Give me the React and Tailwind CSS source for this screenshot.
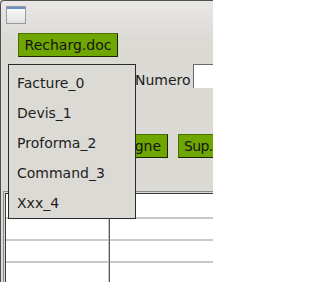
function GreenButton({ children, className }) {
  return (
    <button
      className={`h-[24px] shrink-0 flex items-center bg-[#6fa600] border border-[#4a7000] border-r-[#1a2600] border-b-[#1a2600] text-[14px] leading-none text-[#141414] ${className}`}
    >
      {children}
    </button>
  );
}

export default function App() {
  const docTypes = ["Facture_0", "Devis_1", "Proforma_2", "Command_3", "Xxx_4"];
  const rows = [0, 1, 2, 3];

  return (
    <div className="relative w-[213px] h-[282px] overflow-hidden bg-[#dcdad5] font-['DejaVu_Sans',sans-serif] text-[14px] text-[#1a1a1a]">
      <div className="w-[240px] min-h-[300px] flex flex-col border-l border-t border-[#505050] rounded-tl-[4px] bg-linear-to-b from-[#e8e7e4] to-[#dcdad5] to-[40px]">
        {/* window icon */}
        <div className="shrink-0 ml-[5px] mt-[5px] w-[20px] h-[18px] border border-[#9a9a9a] bg-linear-to-b from-[#fbfbfb] to-[#e2e2e2]">
          <div className="h-[2px] bg-[#6c8ec6]"></div>
        </div>

        <GreenButton className="ml-[17px] mt-[9px] w-[100px] justify-center">Recharg.doc</GreenButton>

        <div className="shrink-0 mt-[7px] flex h-[24px]">
          <div className="ml-[7px] w-[127px] h-[24px] border border-[#2a2a2a] bg-[#dcdad5]"></div>
          <span className="self-end leading-[16px]">Numero</span>
          <div className="ml-[2px] w-[40px] h-[24px] bg-white border-t border-l border-[#6a6a6a]"></div>
        </div>

        <div className="shrink-0 mt-[46px] flex">
          <GreenButton className="ml-[114px] w-[53px] pl-[7px]">Ligne</GreenButton>
          <GreenButton className="ml-[10px] pl-[5px] pr-[6px] tracking-[-0.6px]">Sup.</GreenButton>
        </div>

        <div className="shrink-0 mt-[33px] ml-[2px] border border-[#8c8c8c] p-[1px]">
          <div className="border-t border-l border-[#3a3a3a] grid grid-cols-[103px_1fr] gap-x-[1px] bg-[#555555]">
            {rows.map((r) => [
              <div
                key={`a${r}`}
                className={`bg-white border-r border-b-2 border-[#c8c8c8] ${r === 0 ? "h-[25px]" : "h-[22px]"}`}
              ></div>,
              <div
                key={`b${r}`}
                className={`bg-white border-b-2 border-[#c8c8c8] ${r === 0 ? "h-[25px]" : "h-[22px]"}`}
              ></div>,
            ])}
          </div>
        </div>
      </div>

      {/* open dropdown menu */}
      <div className="absolute left-[8px] top-[64px] w-[128px] h-[155px] border border-[#2a2a2a] bg-[#dcdad5] pt-[3px]">
        {docTypes.map((t) => (
          <div key={t} className="h-[30px] pl-[8px] flex items-center text-[#1e1e1e]">
            {t}
          </div>
        ))}
      </div>
    </div>
  );
}
